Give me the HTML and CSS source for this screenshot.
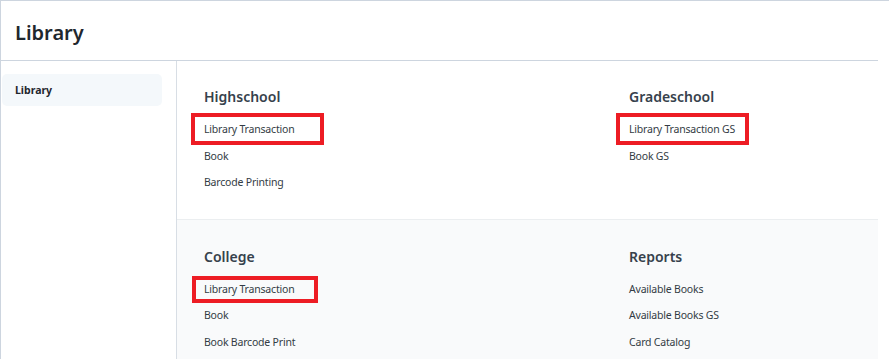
FILE: index.html
```html
<!DOCTYPE html>
<html lang="en">
<head>
    <meta charset="UTF-8">
    <title>Library</title>
    <link rel="stylesheet" href="styles.css">
</head>
<body>
    <div class="page">
        <div class="header">
            <h1 class="title">Library</h1>
        </div>
        <div class="layout">
            <div class="sidebar">
                <div class="side-item">Library</div>
            </div>
            <div class="main">
                <div class="section">
                    <div class="col">
                        <h3 class="head">Highschool</h3>
                        <div class="link mark">Library Transaction</div>
                        <div class="link">Book</div>
                        <div class="link">Barcode Printing</div>
                    </div>
                    <div class="col">
                        <h3 class="head">Gradeschool</h3>
                        <div class="link mark">Library Transaction GS</div>
                        <div class="link">Book GS</div>
                    </div>
                </div>
                <div class="section alt">
                    <div class="col">
                        <h3 class="head">College</h3>
                        <div class="link mark small">Library Transaction</div>
                        <div class="link">Book</div>
                        <div class="link">Book Barcode Print</div>
                    </div>
                    <div class="col">
                        <h3 class="head">Reports</h3>
                        <div class="link">Available Books</div>
                        <div class="link">Available Books GS</div>
                        <div class="link">Card Catalog</div>
                    </div>
                </div>
            </div>
        </div>
    </div>
</body>
</html>
```

FILE: styles.css
```css
body {
    margin: 0;
    font-family: "Noto Sans", "Open Sans", sans-serif;
    color: #36414c;
    background: #fff;
}
.page {
    border-top: 1px solid #cdd5df;
    border-left: 1px solid #cdd5df;
    height: 358px;
    overflow: hidden;
}
.header {
    width: 877px;
    height: 59px;
    border-bottom: 1px solid #cdd5df;
    display: flex;
    align-items: center;
}
.title {
    margin: 3px 0 0 14px;
    font-size: 20px;
    font-weight: 600;
    color: #1f272e;
}
.layout {
    display: flex;
    width: 877px;
}
.sidebar {
    width: 176px;
    border-right: 1px solid #d8dee5;
    padding: 13px 14px 0 1px;
    box-sizing: border-box;
    min-height: 300px;
}
.side-item {
    background: #f4f8fb;
    border-radius: 5px;
    height: 32px;
    line-height: 32px;
    padding-left: 13px;
    font-size: 10.5px;
    font-weight: 700;
    color: #1f272e;
}
.main {
    flex: 1;
}
.section {
    display: grid;
    grid-template-columns: 425px 1fr;
    padding: 26px 26px 23px 27px;
}
.alt {
    background: #f9fafb;
    border-top: 1px solid #ebeef0;
    padding-top: 27px;
}
.head {
    margin: 0 0 9px;
    font-size: 14px;
    font-weight: 600;
    line-height: 20px;
    color: #36414c;
}
.link {
    position: relative;
    font-size: 10.5px;
    letter-spacing: -0.2px;
    line-height: 26.5px;
    color: #333c44;
}
.mark::after {
    content: "";
    position: absolute;
    left: -13px;
    top: -3px;
    width: 125px;
    height: 24px;
    border: 4px solid #ed1c24;
}
.small::after {
    left: -12px;
    top: 0;
    width: 118px;
    height: 19px;
}
```
